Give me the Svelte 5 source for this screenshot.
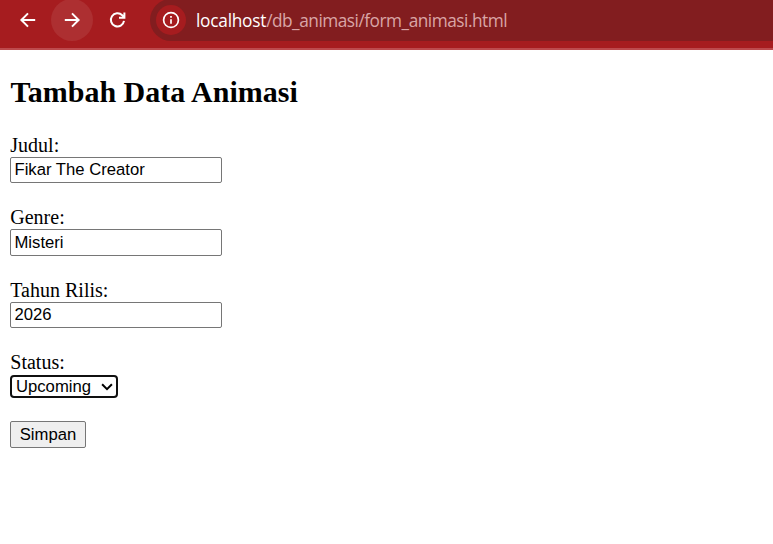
<script>
  let form = $state({ judul: 'Fikar The Creator', genre: 'Misteri', tahun: '2026' });
</script>

<div class="page">
  <header class="toolbar">
    <button class="nav back" aria-label="Back">
      <svg width="20" height="20" viewBox="0 0 20 20"><path d="M17.2 10H4M10 3.4 3.4 10l6.6 6.6" /></svg>
    </button>
    <button class="nav forward" aria-label="Forward">
      <svg width="20" height="20" viewBox="0 0 20 20"><path d="M2.8 10H16M10 3.4l6.6 6.6-6.6 6.6" /></svg>
    </button>
    <button class="nav reload" aria-label="Reload">
      <svg width="20" height="20" viewBox="0 0 20 20"><path d="M16 10.8A6.6 6.6 0 1 1 14.2 5.2L16 7M16.4 2.4v5.3H11" /></svg>
    </button>
    <div class="address">
      <span class="info">
        <svg width="20" height="20" viewBox="0 0 20 20">
          <circle cx="10" cy="10" r="7.4" />
          <path d="M10 9.2v4.6M10 6v1.8" />
        </svg>
      </span>
      <span class="url"><b>localhost</b>/db_animasi/form_animasi.html</span>
    </div>
  </header>

  <main>
    <h2>Tambah Data Animasi</h2>
    <form onsubmit={(e) => e.preventDefault()}>
      <div class="field">
        <label for="judul">Judul:</label>
        <input id="judul" bind:value={form.judul} />
      </div>
      <div class="field second">
        <label for="genre">Genre:</label>
        <input id="genre" bind:value={form.genre} />
      </div>
      <div class="field">
        <label for="tahun">Tahun Rilis:</label>
        <input id="tahun" bind:value={form.tahun} />
      </div>
      <div class="field">
        <span class="label">Status:</span>
        <div class="select" role="combobox" aria-expanded="false" aria-controls="status" tabindex="0">
          <span>Upcoming</span>
          <svg width="12" height="8" viewBox="0 0 12 8"><path d="m1.1 1.3 4.9 4.9 4.9-4.9" /></svg>
        </div>
      </div>
      <button class="submit">Simpan</button>
    </form>
  </main>
</div>

<style>
  :global(body) { margin: 0; background: #fff; }
  .page { height: 544px; overflow: hidden; background: #fff; color: #000; }
  .toolbar {
    box-sizing: border-box;
    height: 50px;
    display: flex;
    align-items: flex-start;
    padding-left: 7px;
    background: #a61c1f;
    border-bottom: 2px solid #bd4a4d;
  }
  .nav {
    box-sizing: border-box;
    flex: none;
    width: 42px;
    height: 42px;
    margin: -1px 2px 0 0;
    padding: 0;
    border: 0;
    border-radius: 50%;
    background: none;
    display: flex;
    align-items: center;
    justify-content: center;
  }
  .forward { background: #ad2f31; }
  .back { margin-right: 2px; }
  .reload { margin-left: 2px; }
  svg { display: block; fill: none; stroke: #fff; stroke-width: 2; }
  .address {
    flex: 1;
    height: 42px;
    margin: -1px 0 0 9px;
    border-radius: 21px 0 0 21px;
    background: #821d1f;
    display: flex;
    align-items: center;
  }
  .info {
    width: 30px;
    height: 30px;
    margin-left: 6px;
    border-radius: 50%;
    background: #a61c1f;
    display: flex;
    align-items: center;
    justify-content: center;
  }
  .info svg { stroke-width: 1.7; }
  .url {
    margin-left: 10px;
    padding-top: 2px;
    font: 17.3px/24px "Open Sans", "Noto Sans", sans-serif;
    letter-spacing: -0.5px;
    color: #d9a5a6;
    white-space: nowrap;
  }
  .url b { font-weight: 400; letter-spacing: -0.25px; color: #fff; }
  main { padding: 25px 10px 0; font: 20px/23px "Liberation Serif", "Times New Roman", serif; }
  h2 { margin: 0 0 25px; padding-left: 0.5px; font-size: 30px; line-height: 34px; font-weight: 700; }
  form { display: flex; flex-direction: column; align-items: flex-start; }
  .field { display: flex; flex-direction: column; align-items: flex-start; margin-bottom: 23px; }
  label, .label { padding-left: 0.3px; line-height: 23px; }
  input {
    box-sizing: border-box;
    width: 212px;
    height: 26px;
    margin: 0;
    padding: 0 3.5px 1px;
    border: 1px solid #767676;
    border-radius: 2px;
    outline: 0;
    background: #fff;
    color: #000;
    font: 16.667px "Liberation Sans", Arial, sans-serif;
  }
  .second input { height: 27px; padding-top: 1px; padding-bottom: 0; }
  .select {
    box-sizing: border-box;
    width: 108px;
    height: 23px;
    margin-top: 1px;
    padding: 0 3px 0 4px;
    border: 2px solid #101010;
    border-radius: 4px;
    outline: 0;
    display: flex;
    align-items: center;
    justify-content: space-between;
    font: 16.667px/19px "Liberation Sans", Arial, sans-serif;
  }
  .select svg { stroke: #000; }
  .submit {
    box-sizing: border-box;
    width: 76px;
    height: 27px;
    padding: 0;
    border: 1px solid #767676;
    border-radius: 2px;
    background: #efefef;
    color: #000;
    font: 16.667px "Liberation Sans", Arial, sans-serif;
  }
</style>
